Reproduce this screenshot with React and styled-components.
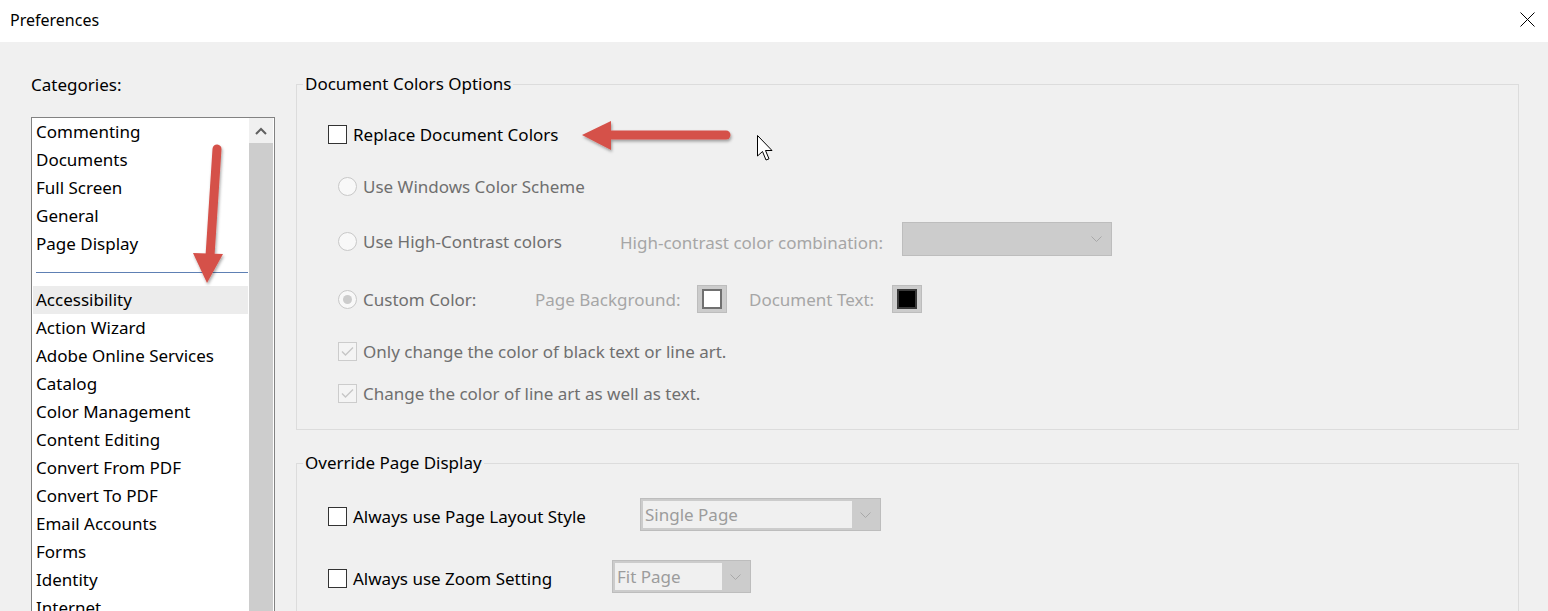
import React from "react";
import styled, { createGlobalStyle } from "styled-components";

const GlobalStyle = createGlobalStyle`
  html, body {
    margin: 0;
    padding: 0;
    background: #f0f0f0;
  }
  body {
    font-family: "Noto Sans", "Open Sans", sans-serif;
    font-size: 17px;
    color: #000;
  }
`

const Window = styled.div`
  position: relative;
  width: 1548px;
  height: 611px;
  overflow: hidden;
  background: #f0f0f0;
`

const TitleBar = styled.div`
  display: flex;
  height: 42px;
  align-items: center;
  justify-content: space-between;
  padding: 0 13px 0 10px;
  background: #fff;
`

const Title = styled.div`
  font-size: 16px;
  line-height: 24px;
  margin-top: -2px;
`

const CloseButton = styled.div`
  display: flex;
  width: 15px;
  height: 15px;
  margin-top: -3px;
`

const Body = styled.div`
  display: flex;
  height: 569px;
`

const Sidebar = styled.div`
  display: flex;
  flex-direction: column;
  width: 244px;
  padding-left: 31px;
`

const SideLabel = styled.div`
  margin-top: 31px;
  line-height: 24px;
`

const ListBox = styled.div`
  display: flex;
  margin-top: 20px;
  height: 520px;
  border: 1px solid #828282;
  background: #fff;
`

const ListItems = styled.div`
  flex: 1;
  padding: 0 1px;
`

const Item = styled.div`
  height: 28px;
  line-height: 28px;
  padding-left: 3px;
  white-space: nowrap;
  background: ${p => (p.$selected ? "#ececec" : "transparent")};
`

const Separator = styled.div`
  display: flex;
  align-items: center;
  height: 28px;
  padding-left: 3px;

  &::after {
    content: "";
    flex: 1;
    height: 1px;
    background: #5e80b4;
  }
`

const Scrollbar = styled.div`
  display: flex;
  flex-direction: column;
  width: 24px;
  margin-right: 1px;
`

const ScrollButton = styled.div`
  display: flex;
  align-items: center;
  justify-content: center;
  height: 25px;
  background: #f0f0f0;
`

const ScrollThumb = styled.div`
  flex: 1;
  background: #cdcdcd;
`

const Main = styled.div`
  display: flex;
  flex-direction: column;
  width: 1223px;
  margin-left: 21px;
`

const Group = styled.fieldset`
  margin: ${p => p.$top}px 0 0 0;
  padding: 0 0 ${p => p.$bottom || 0}px 0;
  border: 1px solid #dcdcdc;
  min-width: 0;
`

const Legend = styled.legend`
  margin-left: 6px;
  padding: 0 2px;
  line-height: 24px;
  font-size: 17px;
`

const Row = styled.div`
  display: flex;
  align-items: center;
  height: ${p => p.$height || 28}px;
  margin-top: ${p => p.$top}px;
  padding-left: ${p => 31 + (p.$indent || 0)}px;
`

const Option = styled.label`
  display: flex;
  align-items: center;
  gap: 6px;
  width: ${p => (p.$width ? `${p.$width}px` : "auto")};
  margin-top: ${p => p.$shift || 0}px;
  flex-shrink: 0;
  color: ${p => (p.$disabled ? "#6f6f6f" : "#000")};
  white-space: nowrap;
`

const Box = styled.span`
  display: flex;
  align-items: center;
  justify-content: center;
  width: 17px;
  height: 17px;
  flex-shrink: 0;
  border: 1px solid ${p => (p.$disabled ? "#cccccc" : "#333333")};
  background: ${p => (p.$disabled ? "#f4f4f4" : "#ffffff")};
`

const Radio = styled.span`
  display: flex;
  align-items: center;
  justify-content: center;
  width: 17px;
  height: 17px;
  flex-shrink: 0;
  border: 1px solid #c8c8c8;
  border-radius: 50%;
  background: #f8f8f8;

  &::after {
    content: "";
    display: ${p => (p.$checked ? "block" : "none")};
    width: 9px;
    height: 9px;
    border-radius: 50%;
    background: #cccccc;
  }
`

const Hint = styled.span`
  width: ${p => p.$width}px;
  margin-left: ${p => p.$gap || 0}px;
  margin-top: ${p => p.$shift || 0}px;
  flex-shrink: 0;
  color: #a6a6a6;
  white-space: nowrap;
`

const Swatch = styled.span`
  display: flex;
  align-items: center;
  justify-content: center;
  width: 28px;
  height: 26px;
  flex-shrink: 0;
  border: 1px solid #bdbdbd;
  background: #cccccc;

  &::after {
    content: "";
    width: 16px;
    height: 16px;
    border: 2px solid ${p => (p.$fill === "#000" ? "#3a3a3a" : "#707070")};
    background: ${p => p.$fill};
  }
`

const Select = styled.div`
  display: flex;
  align-items: center;
  width: ${p => p.$width}px;
  height: ${p => p.$height || 32}px;
  box-sizing: border-box;
  border: 1px solid #bdbdbd;
  background: #cccccc;
  padding: 2px;
  flex-shrink: 0;
`

const SelectValue = styled.div`
  flex: 1;
  align-self: stretch;
  display: flex;
  align-items: center;
  padding-left: 2px;
  background: ${p => (p.$empty ? "transparent" : "#f0f0f0")};
  color: #9c9c9c;
  white-space: nowrap;
`

const SelectArrow = styled.div`
  display: flex;
  align-items: center;
  justify-content: center;
  width: 26px;
`

const Overlay = styled.svg`
  position: absolute;
  left: 0;
  top: 0;
  pointer-events: none;
`

const Chevron = () => (
  <svg width="12" height="8" viewBox="0 0 12 8">
    <path d="M1 7 L6 2 L11 7" fill="none" stroke="#606060" strokeWidth="2" />
  </svg>
)

const DownChevron = () => (
  <svg width="11" height="6" viewBox="0 0 11 6">
    <path d="M0.5 0.5 L5.5 5.5 L10.5 0.5" fill="none" stroke="#a8a8a8" strokeWidth="1" />
  </svg>
)

const Check = () => (
  <svg width="13" height="11" viewBox="0 0 13 11">
    <path d="M1 5.5 L4.5 9 L12 1.5" fill="none" stroke="#c6c6c6" strokeWidth="1.4" />
  </svg>
)

const topCategories = ["Commenting", "Documents", "Full Screen", "General", "Page Display"];
const allCategories = [
  "Accessibility",
  "Action Wizard",
  "Adobe Online Services",
  "Catalog",
  "Color Management",
  "Content Editing",
  "Convert From PDF",
  "Convert To PDF",
  "Email Accounts",
  "Forms",
  "Identity",
  "Internet",
];

const Dropdown = ({ width, value }) => (
  <Select $width={width} $height={value ? 33 : 34}>
    <SelectValue $empty={!value}>{value}</SelectValue>
    <SelectArrow>
      <DownChevron />
    </SelectArrow>
  </Select>
)

const App = () => {
  return (
    <>
      <GlobalStyle />
      <Window>
        <TitleBar>
          <Title>Preferences</Title>
          <CloseButton>
            <svg width="15" height="15" viewBox="0 0 15 15">
              <path d="M0.5 0.5 L14.5 14.5 M14.5 0.5 L0.5 14.5" stroke="#000" strokeWidth="1" />
            </svg>
          </CloseButton>
        </TitleBar>
        <Body>
          <Sidebar>
            <SideLabel>Categories:</SideLabel>
            <ListBox>
              <ListItems>
                {topCategories.map(c => (
                  <Item key={c}>{c}</Item>
                ))}
                <Separator />
                {allCategories.map(c => (
                  <Item key={c} $selected={c === "Accessibility"}>{c}</Item>
                ))}
              </ListItems>
              <Scrollbar>
                <ScrollButton>
                  <Chevron />
                </ScrollButton>
                <ScrollThumb />
              </Scrollbar>
            </ListBox>
          </Sidebar>
          <Main>
            <Group $top={30} $bottom={22}>
              <Legend>Document Colors Options</Legend>
              <Row $top={24}>
                <Option>
                  <Box />
                  Replace Document Colors
                </Option>
              </Row>
              <Row $top={24} $indent={10}>
                <Option $disabled>
                  <Radio />
                  Use Windows Color Scheme
                </Option>
              </Row>
              <Row $top={22} $indent={10} $height={34}>
                <Option $disabled $width={282} $shift={5}>
                  <Radio />
                  Use High-Contrast colors
                </Option>
                <Hint $width={282} $shift={6}>High-contrast color combination:</Hint>
                <Dropdown width={210} />
              </Row>
              <Row $top={29} $indent={10}>
                <Option $disabled $width={197}>
                  <Radio $checked />
                  Custom Color:
                </Option>
                <Hint $width={162}>Page Background:</Hint>
                <Swatch $fill="#fff" />
                <Hint $width={143} $gap={22}>Document Text:</Hint>
                <Swatch $fill="#000" />
              </Row>
              <Row $top={24} $indent={10}>
                <Option $disabled>
                  <Box $disabled>
                    <Check />
                  </Box>
                  Only change the color of black text or line art.
                </Option>
              </Row>
              <Row $top={14} $indent={10}>
                <Option $disabled>
                  <Box $disabled>
                    <Check />
                  </Box>
                  Change the color of line art as well as text.
                </Option>
              </Row>
            </Group>
            <Group $top={21} $bottom={40}>
              <Legend>Override Page Display</Legend>
              <Row $top={23} $height={33}>
                <Option $width={312} $shift={4}>
                  <Box />
                  Always use Page Layout Style
                </Option>
                <Dropdown width={241} value="Single Page" />
              </Row>
              <Row $top={29} $height={33}>
                <Option $width={284} $shift={3}>
                  <Box />
                  Always use Zoom Setting
                </Option>
                <Dropdown width={139} value="Fit Page" />
              </Row>
            </Group>
          </Main>
        </Body>
        <Overlay width="1548" height="611" viewBox="0 0 1548 611">
          <defs>
            <filter id="shadow" x="-20%" y="-20%" width="140%" height="140%">
              <feDropShadow dx="1" dy="2" stdDeviation="1.5" floodColor="#000" floodOpacity="0.35" />
            </filter>
          </defs>
          <g filter="url(#shadow)" fill="#d5514a" stroke="#d5514a">
            <path d="M217 149 L210 256" strokeWidth="9" strokeLinecap="round" fill="none" />
            <polygon points="193,253 223,254 207,283" stroke="none" />
            <path d="M608 135 L726 135" strokeWidth="9" strokeLinecap="round" fill="none" />
            <polygon points="611,121 611,150 582,135" stroke="none" />
          </g>
          <path
            d="M757.5 135.5 L757.5 156 L762.5 151.5 L766 160 L769 158.8 L765.5 150.5 L772 150.5 Z"
            fill="#fff"
            stroke="#000"
            strokeWidth="1"
          />
        </Overlay>
      </Window>
    </>
  );
};

export default App;
